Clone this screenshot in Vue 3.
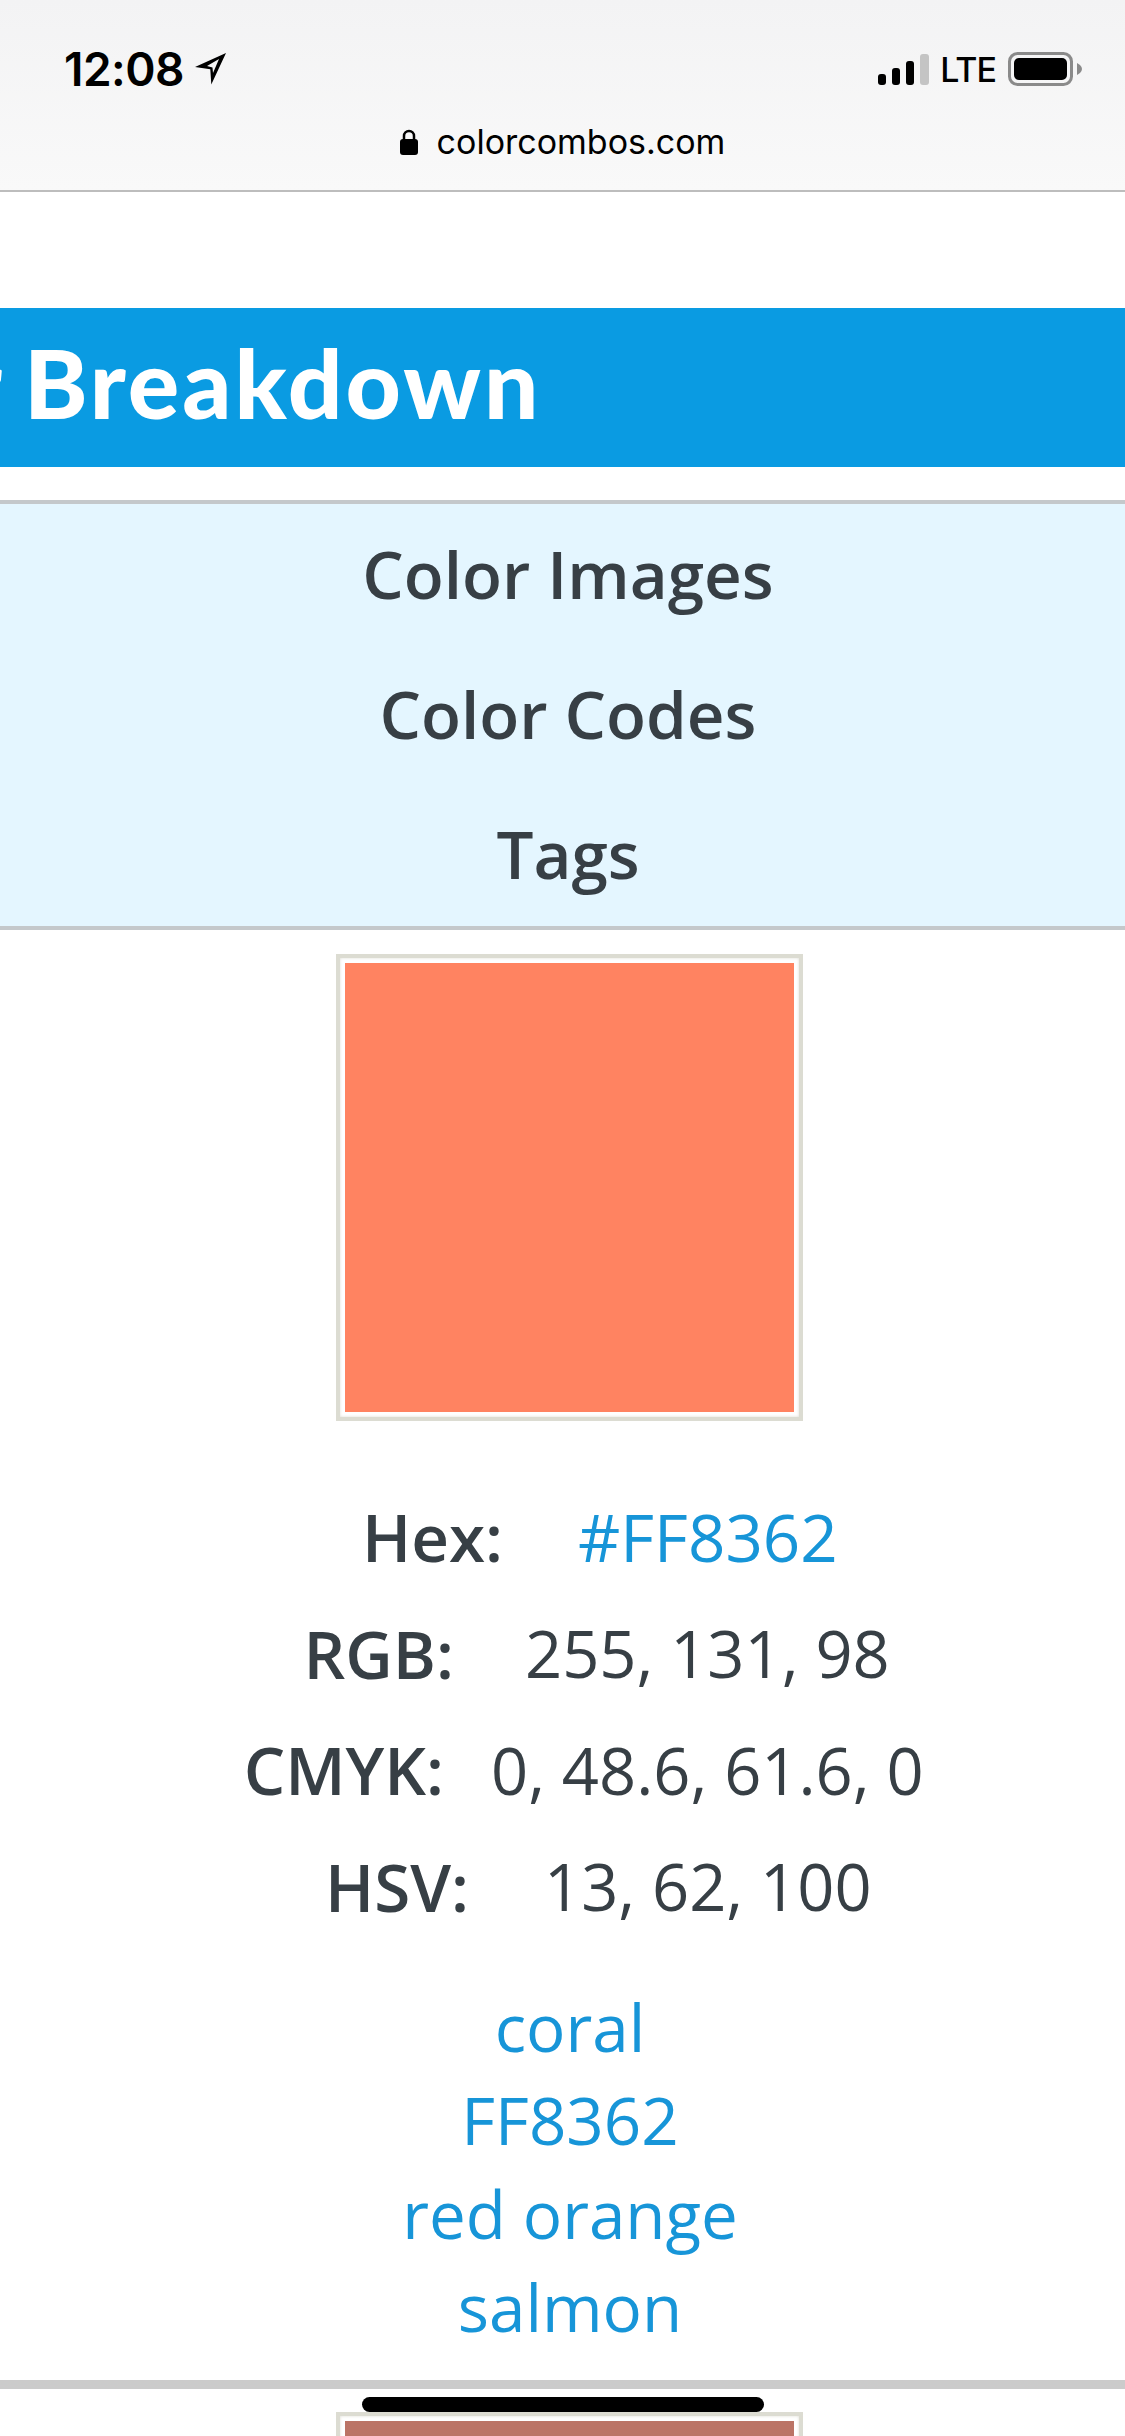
<template>
  <div class="page">
    <header class="browser-bar">
      <div class="status">
        <div class="status-left">
          <span class="time">12:08</span>
          <svg class="arrow" viewBox="0 0 31 32" width="31" height="32">
            <path d="M31 0 L0 14 L15.300 16.300 L16.300 31.500 Z M24 6 L12 13 L17.500 14.500 L18 20 Z" fill="#000" fill-rule="evenodd" />
          </svg>
        </div>
        <div class="status-right">
          <svg class="signal" viewBox="0 0 51 31" width="51" height="31">
            <rect x="0" y="20" width="8" height="11" rx="3" fill="#000" />
            <rect x="14" y="14" width="8" height="17" rx="3" fill="#000" />
            <rect x="28" y="7" width="8" height="24" rx="3" fill="#000" />
            <rect x="42" y="0" width="9" height="31" rx="3" fill="#c4c4c4" />
          </svg>
          <span class="lte">LTE</span>
          <svg class="battery" viewBox="0 0 74 34" width="74" height="34">
            <rect x="1.500" y="1.500" width="62" height="31" rx="8" fill="none" stroke="#8a8a8a" stroke-width="3" />
            <rect x="6" y="6" width="53" height="22" rx="5" fill="#000" />
            <path d="M69 11 L72 13 Q74 15 74 17 Q74 19 72 21 L69 23 Z" fill="#8a8a8a" />
          </svg>
        </div>
      </div>
      <div class="address">
        <svg class="lock" viewBox="0 0 18 26" width="18" height="26">
          <path d="M4 11 V7 a5 5 0 0 1 10 0 V11" fill="none" stroke="#000" stroke-width="2.500" />
          <rect x="0" y="10" width="18" height="16" rx="3" fill="#000" />
        </svg>
        <span>colorcombos.com</span>
      </div>
    </header>

    <div class="title-bar">
      <h1><span class="cut">Color</span>Breakdown</h1>
    </div>

    <nav class="jump-links">
      <a v-for="item in jumpLinks" :key="item">{{ item }}</a>
    </nav>

    <section class="color-block">
      <div class="swatch-frame"><div class="swatch coral"></div></div>

      <div class="codes">
        <div v-for="row in codes" :key="row.label" class="code-row">
          <span class="code-label" :style="{ width: row.labelEnd + 'px' }">{{ row.label }}</span>
          <a v-if="row.link" class="code-value link" :style="{ marginLeft: row.gap + 'px' }">{{ row.value }}</a>
          <span v-else class="code-value" :style="{ marginLeft: row.gap + 'px' }">{{ row.value }}</span>
        </div>
      </div>

      <div class="tags">
        <a v-for="tag in tags" :key="tag">{{ tag }}</a>
      </div>
    </section>

    <section class="color-block next">
      <div class="swatch-frame"><div class="swatch brick"></div></div>
    </section>

    <div class="home-bar"></div>
  </div>
</template>

<script setup>
const jumpLinks = ['Color Images', 'Color Codes', 'Tags']

const codes = [
  { label: 'Hex:', value: '#FF8362', link: true, labelEnd: 503, gap: 75 },
  { label: 'RGB:', value: '255, 131, 98', labelEnd: 454, gap: 71 },
  { label: 'CMYK:', value: '0, 48.6, 61.6, 0', labelEnd: 444, gap: 47 },
  { label: 'HSV:', value: '13, 62, 100', labelEnd: 469, gap: 75 }
]

const tags = ['coral', 'FF8362', 'red orange', 'salmon']
</script>

<style>
html, body { margin: 0; background: #fff; }
</style>

<style scoped>
.page {
  position: relative;
  width: 1125px;
  height: 2436px;
  overflow: hidden;
  background: #fff;
  font-family: "Open Sans", "Liberation Sans", sans-serif;
  color: #373f45;
}

.browser-bar {
  box-sizing: border-box;
  height: 192px;
  padding-top: 50px;
  background: linear-gradient(#f3f3f4, #f9f9f9);
  border-bottom: 2px solid #bdbdbd;
  font-family: Inter, "Liberation Sans", sans-serif;
  color: #000;
}
.status {
  display: flex;
  justify-content: space-between;
  align-items: center;
  height: 38px;
  padding: 0 43px 0 64px;
}
.status-left, .status-right { display: flex; align-items: center; }
.time { font-size: 46px; font-weight: 600; letter-spacing: -0.5px; }
.arrow { margin-left: 11px; }
.lte { margin-left: 11px; font-size: 34px; font-weight: 500; letter-spacing: -1px; }
.battery { margin-left: 12px; }

.address {
  display: flex;
  justify-content: center;
  align-items: center;
  gap: 19px;
  margin-top: 34px;
  font-size: 34px;
  line-height: 40px;
}

.title-bar {
  box-sizing: border-box;
  height: 159px;
  margin-top: 116px;
  padding-left: 24px;
  background: #0a9be2;
}
.title-bar h1 {
  position: relative;
  margin: 0;
  font-family: Lato, "Liberation Sans", sans-serif;
  font-size: 96px;
  font-weight: 900;
  letter-spacing: 3px;
  line-height: 148px;
  color: #fff;
}
.cut { position: absolute; right: 100%; margin-right: 19px; }

.jump-links {
  display: flex;
  flex-direction: column;
  align-items: center;
  box-sizing: border-box;
  height: 430px;
  margin-top: 33px;
  padding-left: 11px;
  background: #e4f6ff;
  border-top: 4px solid #c4c8cb;
  border-bottom: 4px solid #c4c8cb;
  font-size: 65.500px;
  font-weight: 600;
  line-height: 140px;
}

.color-block { display: flex; flex-direction: column; align-items: center; padding: 24px 0 0 13px; }
.swatch-frame {
  box-sizing: border-box;
  width: 467px;
  height: 467px;
  padding: 5px;
  background: #fff;
  border: 4px solid #dcdcd2;
  box-shadow: inset 0 0 3px #dcdcd2;
}
.swatch { width: 100%; height: 100%; box-shadow: 0 0 3px rgba(255, 255, 255, 0.9); }
.coral { background: #ff8361; }
.brick { background: #bb7466; }

.codes { align-self: flex-start; margin: 57px 0 0 -13px; }
.code-row { display: flex; height: 116.700px; align-items: center; font-size: 65px; }
.code-label { flex: none; text-align: right; font-weight: 600; font-size: 65.500px; }
.code-value { white-space: nowrap; }
.link { color: #1795d8; font-size: 65.500px; }

.tags {
  display: flex;
  flex-direction: column;
  align-items: center;
  align-self: stretch;
  box-sizing: border-box;
  height: 409px;
  margin: 35px 0 0 -13px;
  padding-left: 15px;
  border-bottom: 9px solid #cbcbcb;
  font-size: 65.500px;
  line-height: 93.500px;
  color: #1795d8;
}
.color-block.next { padding-top: 23px; }

.home-bar {
  position: absolute;
  left: 362px;
  top: 2397px;
  width: 402px;
  height: 15px;
  border-radius: 8px;
  background: #000;
}
</style>
